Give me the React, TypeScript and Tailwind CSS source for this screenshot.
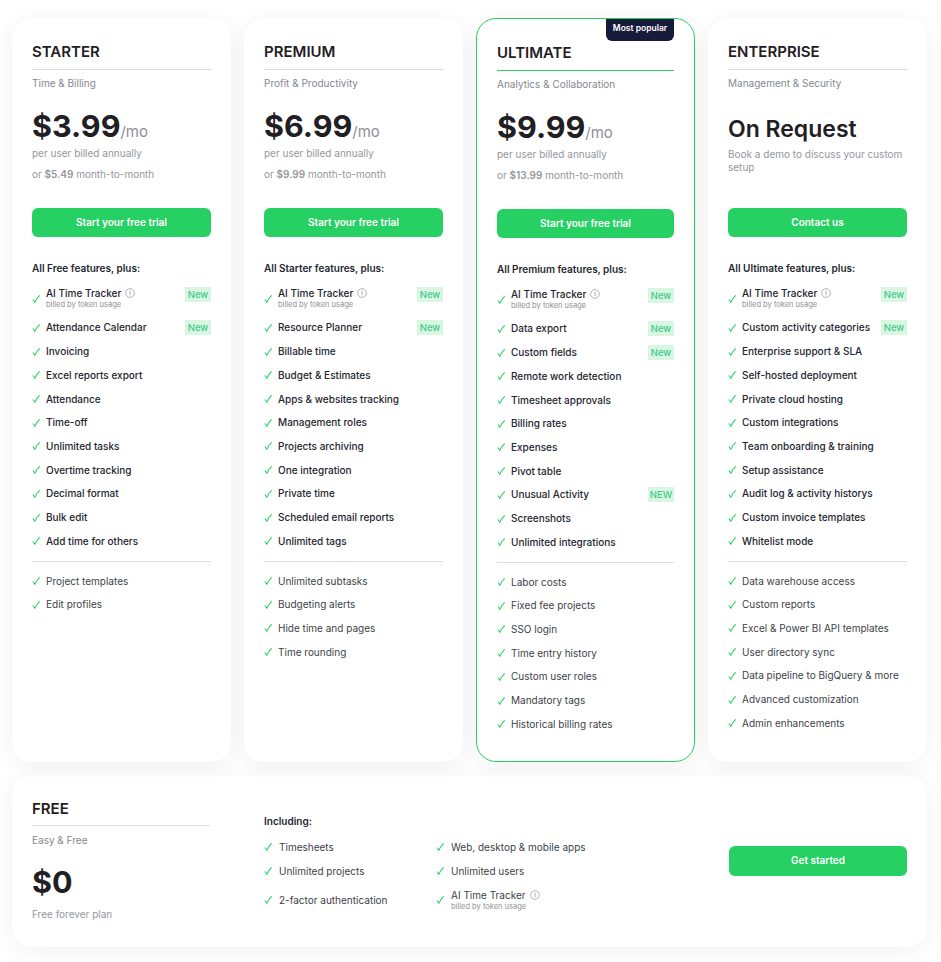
import React from "react";

type Feature = { t: string; badge?: string; ai?: boolean };

const Check = ({ className = "" }: { className?: string }) => (
  <svg viewBox="0 0 10 10" className={"w-[9px] h-[10px] shrink-0 " + className} fill="none">
    <path d="M1 5.6 L3.1 8.6 C4.4 5.6 6.2 3.2 8.6 1" stroke="#26d061" strokeWidth="1.2" />
  </svg>
);

const Info = () => (
  <svg viewBox="0 0 12 12" className="w-[10px] h-[10px] shrink-0" fill="none">
    <circle cx="6" cy="6" r="5.2" stroke="#9a9a9a" strokeWidth="0.9" />
    <path d="M6 3.2V8.6" stroke="#9a9a9a" strokeWidth="1" />
  </svg>
);

const Badge = ({ label }: { label: string }) => (
  <span className="ml-auto block shrink-0 w-[26px] h-[15px] bg-[#d9f6e3] text-[#3ecb88] text-[9.5px] font-medium leading-[15px] text-center">
    {label}
  </span>
);

const Row = ({ f, strong }: { f: Feature; strong: boolean }) => {
  if (f.ai) {
    return (
      <li className="h-[26px] mb-[5px] flex items-center gap-[5px]">
        <Check className="mt-[2px]" />
        <div className="flex-1 min-w-0">
          <div className="flex items-center gap-[4px] text-[10px] font-medium leading-[14px] text-[#23262f]">
            AI Time Tracker <Info />
          </div>
          <div className="text-[7.5px] leading-[10px] text-[#8f8f8f]">billed by token usage</div>
        </div>
        {f.badge && <div className="self-start mt-[2px]"><Badge label={f.badge} /></div>}
      </li>
    );
  }
  return (
    <li className="h-[23.72px] flex items-center gap-[5px]">
      <Check />
      <span className={"text-[10px] whitespace-nowrap " + (strong ? "font-medium text-[#23262f]" : "text-[#3c3f48]")}>{f.t}</span>
      {f.badge && <Badge label={f.badge} />}
    </li>
  );
};

type Plan = {
  name: string;
  sub: string;
  price?: string;
  month?: string;
  cta: string;
  head: string;
  a: Feature[];
  b: string[];
  popular?: boolean;
};

const ai: Feature = { t: "AI Time Tracker", ai: true, badge: "New" };
const n = (t: string, badge?: string): Feature => ({ t, badge });

const plans: Plan[] = [
  {
    name: "STARTER", sub: "Time & Billing", price: "$3.99", month: "$5.49", cta: "Start your free trial", head: "All Free features, plus:",
    a: [ai, n("Attendance Calendar", "New"), n("Invoicing"), n("Excel reports export"), n("Attendance"), n("Time-off"), n("Unlimited tasks"), n("Overtime tracking"), n("Decimal format"), n("Bulk edit"), n("Add time for others")],
    b: ["Project templates", "Edit profiles"],
  },
  {
    name: "PREMIUM", sub: "Profit & Productivity", price: "$6.99", month: "$9.99", cta: "Start your free trial", head: "All Starter features, plus:",
    a: [ai, n("Resource Planner", "New"), n("Billable time"), n("Budget & Estimates"), n("Apps & websites tracking"), n("Management roles"), n("Projects archiving"), n("One integration"), n("Private time"), n("Scheduled email reports"), n("Unlimited tags")],
    b: ["Unlimited subtasks", "Budgeting alerts", "Hide time and pages", "Time rounding"],
  },
  {
    name: "ULTIMATE", sub: "Analytics & Collaboration", price: "$9.99", month: "$13.99", cta: "Start your free trial", head: "All Premium features, plus:", popular: true,
    a: [ai, n("Data export", "New"), n("Custom fields", "New"), n("Remote work detection"), n("Timesheet approvals"), n("Billing rates"), n("Expenses"), n("Pivot table"), n("Unusual Activity", "NEW"), n("Screenshots"), n("Unlimited integrations")],
    b: ["Labor costs", "Fixed fee projects", "SSO login", "Time entry history", "Custom user roles", "Mandatory tags", "Historical billing rates"],
  },
  {
    name: "ENTERPRISE", sub: "Management & Security", cta: "Contact us", head: "All Ultimate features, plus:",
    a: [ai, n("Custom activity categories", "New"), n("Enterprise support & SLA"), n("Self-hosted deployment"), n("Private cloud hosting"), n("Custom integrations"), n("Team onboarding & training"), n("Setup assistance"), n("Audit log & activity historys"), n("Custom invoice templates"), n("Whitelist mode")],
    b: ["Data warehouse access", "Custom reports", "Excel & Power BI API templates", "User directory sync", "Data pipeline to BigQuery & more", "Advanced customization", "Admin enhancements"],
  },
];

const Card = ({ p }: { p: Plan }) => (
  <div
    className={
      "relative w-[219px] bg-white rounded-[20px] px-5 pt-[22px] shadow-[0_4px_24px_rgba(0,0,0,0.06)] " +
      (p.popular ? "border border-[#26d061]" : "")
    }
  >
    {p.popular && (
      <div className="absolute top-0 right-[20px] w-[68px] h-[22px] bg-[#171a3a] rounded-b-[6px] text-white text-[8.5px] font-semibold leading-[19px] text-center">
        Most popular
      </div>
    )}
    <h2 className={"text-[15px] leading-6 font-semibold text-[#1f2024] pb-[4.5px] border-b " + (p.popular ? "border-[#26d061]" : "border-[#dddddd]")}>
      {p.name}
    </h2>
    <p className="text-[10px] leading-[14px] text-[#85878f] mt-[6.5px]">{p.sub}</p>
    {p.price ? (
      <div className="h-[101px] pt-[16px]">
        <div className="h-[40px] flex items-baseline">
          <span className="text-[30.5px] leading-[40px] font-bold text-[#1f2024]">{p.price}</span>
          <span className="text-[15px] text-[#8d8f96]">/mo</span>
        </div>
        <p className="-mt-[1px] text-[10px] leading-[16px] text-[#94969c]">per user billed annually</p>
        <p className="text-[10px] leading-[16px] text-[#94969c] mt-[5px]">
          or <b className="font-semibold">{p.month}</b> month-to-month
        </p>
      </div>
    ) : (
      <div className="h-[101px] pt-[23px]">
        <div className="text-[23px] leading-[32px] font-semibold text-[#1f2024]">On Request</div>
        <p className="mt-[3px] text-[10px] leading-[13px] text-[#94969c]">Book a demo to discuss your custom setup</p>
      </div>
    )}
    <button className="mt-[17px] w-full h-[29px] rounded-[6px] bg-[#27d063] text-white text-[10px] font-semibold">{p.cta}</button>
    <p className="mt-[24px] text-[10px] leading-[14px] font-semibold text-[#23262f]">{p.head}</p>
    <ul className="mt-[10px]">
      {p.a.map((f) => (
        <Row key={f.t} f={f} strong />
      ))}
    </ul>
    <div className="mt-[8px] mb-[7px] border-t border-[#dddddd]" />
    <ul>
      {p.b.map((t) => (
        <Row key={t} f={{ t }} strong={false} />
      ))}
    </ul>
  </div>
);

const Free = () => (
  <div className="mt-[13px] h-[172px] bg-white rounded-[20px] px-5 flex shadow-[0_4px_24px_rgba(0,0,0,0.06)]">
    <div className="w-[178px] pt-[22px]">
      <h2 className="text-[15px] leading-6 font-semibold text-[#1f2024] pb-[3.5px] border-b border-[#dddddd]">FREE</h2>
      <p className="text-[10px] leading-[14px] text-[#85878f] mt-[7.5px]">Easy & Free</p>
      <div className="mt-[14.5px] text-[30.5px] leading-[40px] font-bold text-[#1f2024]">$0</div>
      <p className="mt-[5.5px] text-[10px] leading-[14px] text-[#94969c]">Free forever plan</p>
    </div>
    <div className="ml-[54px] pt-[39px]">
      <p className="text-[10px] leading-[14px] font-semibold text-[#23262f]">Including:</p>
      <div className="mt-[7px] grid grid-cols-[172px_180px] grid-rows-[24px_24px_34px]">
        {["Timesheets", "Web, desktop & mobile apps", "Unlimited projects", "Unlimited users", "2-factor authentication"].map((t) => (
          <div key={t} className="flex items-center gap-[6px] text-[10px] text-[#3c3f48]"><Check />{t}</div>
        ))}
        <div className="flex items-center gap-[6px]">
          <Check />
          <div>
            <div className="flex items-center gap-[4px] text-[10px] leading-[14px] text-[#3c3f48]">AI Time Tracker <Info /></div>
            <div className="text-[7.5px] leading-[10px] text-[#8f8f8f]">billed by token usage</div>
          </div>
        </div>
      </div>
    </div>
    <div className="ml-auto self-center">
      <button className="w-[178px] h-[30px] pb-[1px] rounded-[6px] bg-[#27d063] text-white text-[10px] font-semibold">Get started</button>
    </div>
  </div>
);

export default function App() {
  return (
    <div className="w-[941px] h-[962px] bg-white pl-3 pt-[18px] overflow-hidden font-['Inter',sans-serif]">
      <div className="w-[915px]">
        <div className="flex gap-[13px] h-[744px]">
          {plans.map((p) => (
            <Card key={p.name} p={p} />
          ))}
        </div>
        <Free />
      </div>
    </div>
  );
}
